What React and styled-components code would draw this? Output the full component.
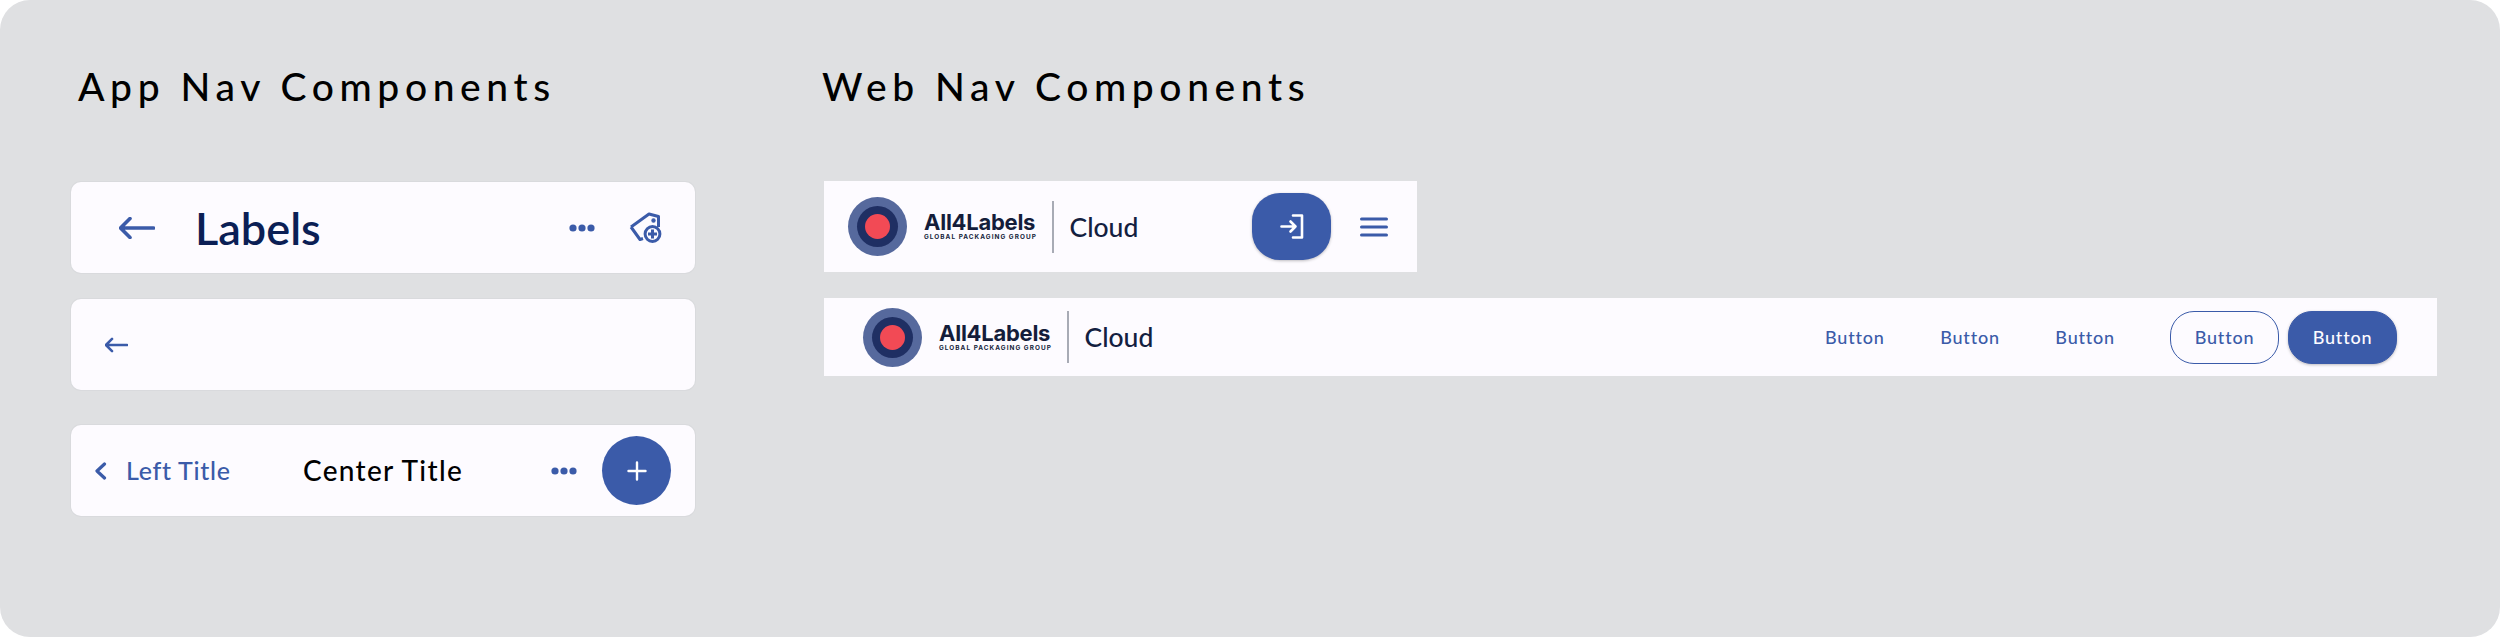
import React from 'react';
import styled, { createGlobalStyle } from 'styled-components';

const BLUE = '#3b5ba9';

const GlobalStyle = createGlobalStyle`
  html, body {
    margin: 0;
    padding: 0;
    background: #ffffff;
  }
  * {
    box-sizing: border-box;
  }
`;

const BackArrow = ({ width, height, strokeWidth }) => (
  <svg width={width} height={height} viewBox="0 0 36 22" fill="none" stroke={BLUE} strokeWidth={strokeWidth} strokeLinecap="round" strokeLinejoin="round">
    <path d="M34.5 11H2M11 1.5L1.5 11l9.5 9.5" />
  </svg>
);

const Dots = () => (
  <svg width="26" height="8" viewBox="0 0 26 8" fill={BLUE}>
    <circle cx="4" cy="4" r="3.6" />
    <circle cx="13" cy="4" r="3.6" />
    <circle cx="22" cy="4" r="3.6" />
  </svg>
);

const TagPlus = () => (
  <svg width="33" height="31" viewBox="0 0 33 31" fill="none" stroke={BLUE} strokeWidth="3" strokeLinejoin="round">
    <path d="M2 15L20 2l9.5 2.5V15M2 15l9 12.5 3-1" />
    <circle cx="24.5" cy="8.5" r="1.6" fill={BLUE} strokeWidth="1.2" />
    <circle cx="23.5" cy="22" r="7.4" />
    <path d="M23.5 17.5v9M19 22h9" strokeLinecap="butt" />
  </svg>
);

const Chevron = () => (
  <svg width="13" height="18" viewBox="0 0 13 18" fill="none" stroke={BLUE} strokeWidth="3.2" strokeLinecap="round" strokeLinejoin="round">
    <path d="M10.5 2L3 9l7.5 7" />
  </svg>
);

const Plus = () => (
  <svg width="20" height="20" viewBox="0 0 20 20" fill="none" stroke="#fff" strokeWidth="2.4" strokeLinecap="round">
    <path d="M10 1.5v17M1.5 10h17" />
  </svg>
);

const LoginIcon = () => (
  <svg width="24" height="25" viewBox="0 0 24 25" fill="none" stroke="#fff" strokeWidth="2.6" strokeLinecap="round" strokeLinejoin="round">
    <path d="M13 1.5h9v22h-9M1.5 12.5h14M10.5 7.5l5 5-5 5" />
  </svg>
);

const Hamburger = () => (
  <svg width="28" height="20" viewBox="0 0 28 20" fill="none" stroke={BLUE} strokeWidth="3" strokeLinecap="round">
    <path d="M1.5 2h25M1.5 10h25M1.5 18h25" />
  </svg>
);

const Logo = () => (
  <LogoWrap>
    <LogoOuter>
      <LogoMiddle>
        <LogoInner />
      </LogoMiddle>
    </LogoOuter>
    <LogoText>
      <LogoName>All4Labels</LogoName>
      <LogoTagline>GLOBAL PACKAGING GROUP</LogoTagline>
    </LogoText>
    <LogoDivider />
    <CloudLabel>Cloud</CloudLabel>
  </LogoWrap>
);

const App = () => (
  <>
    <GlobalStyle />
    <Page>
      <AppColumn>
        <SectionTitle $inset={7} $below={72}>App Nav Components</SectionTitle>
        <AppCard $top={0} $pad="0 33px 0 48px">
          <BackArrow width={36} height={22} strokeWidth={3.6} />
          <LabelsTitle>Labels</LabelsTitle>
          <CardActions $gap={34}>
            <Dots />
            <TagPlus />
          </CardActions>
        </AppCard>
        <AppCard $top={26} $pad="0 0 0 34px">
          <BackArrow width={23} height={16} strokeWidth={4} />
        </AppCard>
        <AppCard $top={35} $pad="0 24px 0 23px">
          <Chevron />
          <LeftTitle>Left Title</LeftTitle>
          <CenterTitle>Center Title</CenterTitle>
          <CardActions $gap={25}>
            <Dots />
            <Fab>
              <Plus />
            </Fab>
          </CardActions>
        </AppCard>
      </AppColumn>
      <WebColumn>
        <SectionTitle $inset={-2} $below={71}>Web Nav Components</SectionTitle>
        <WebBar $width={593} $height={91} $pad="0 29px 0 24px">
          <Logo />
          <BarEnd $gap={29}>
            <LoginButton>
              <LoginIcon />
            </LoginButton>
            <Hamburger />
          </BarEnd>
        </WebBar>
        <WebBar $width={1613} $height={78} $top={26} $pad="0 40px 0 39px">
          <Logo />
          <BarEnd $gap={9}>
            <TextButtons>
              <TextButton>Button</TextButton>
              <TextButton>Button</TextButton>
              <TextButton>Button</TextButton>
            </TextButtons>
            <OutlineButton>Button</OutlineButton>
            <FilledButton>Button</FilledButton>
          </BarEnd>
        </WebBar>
      </WebColumn>
    </Page>
  </>
);

const Page = styled.div`
  width: 2500px;
  height: 637px;
  background: #dfe0e2;
  border-radius: 30px;
  display: flex;
  padding: 62px 0 0 71px;
  overflow: hidden;
`;

const AppColumn = styled.section`
  width: 624px;
  margin-right: 129px;
  display: flex;
  flex-direction: column;
`;

const WebColumn = styled.section`
  width: 1613px;
  display: flex;
  flex-direction: column;
`;

const SectionTitle = styled.h2`
  height: 48px;
  margin: 0 0 ${({ $below }) => $below}px ${({ $inset }) => $inset}px;
  font-family: "Lato", sans-serif;
  font-size: 39px;
  line-height: 48px;
  font-weight: 500;
  letter-spacing: 5.6px;
  color: #000;
  white-space: nowrap;
`;

const AppCard = styled.div`
  height: 91px;
  flex: none;
  margin-top: ${({ $top }) => $top}px;
  padding: ${({ $pad }) => $pad};
  display: flex;
  align-items: center;
  background: #fdfbff;
  border-radius: 10px;
  box-shadow: 0 0 0 1px #d9dadd;
`;

const CardActions = styled.div`
  margin-left: auto;
  display: flex;
  align-items: center;
  gap: ${({ $gap }) => $gap}px;
`;

const LabelsTitle = styled.h1`
  margin: 0 0 0 40px;
  font-family: "Lato", sans-serif;
  font-size: 45px;
  font-weight: 600;
  color: #0b1f55;
`;

const LeftTitle = styled.span`
  margin-left: 19px;
  padding-bottom: 2px;
  width: 177px;
  font-family: "Lato", sans-serif;
  font-size: 25px;
  font-weight: 500;
  letter-spacing: 0.7px;
  color: ${BLUE};
`;

const CenterTitle = styled.span`
  padding-bottom: 2px;
  font-family: "Lato", sans-serif;
  font-size: 28px;
  font-weight: 500;
  letter-spacing: 1.3px;
  color: #000;
`;

const Fab = styled.div`
  width: 69px;
  height: 69px;
  border-radius: 50%;
  background: ${BLUE};
  display: flex;
  align-items: center;
  justify-content: center;
`;

const WebBar = styled.div`
  width: ${({ $width }) => $width}px;
  height: ${({ $height }) => $height}px;
  margin-top: ${({ $top = 0 }) => $top}px;
  padding: ${({ $pad }) => $pad};
  flex: none;
  display: flex;
  align-items: center;
  justify-content: space-between;
  background: #fdfbff;
`;

const LogoWrap = styled.div`
  display: flex;
  align-items: center;
`;

const LogoOuter = styled.div`
  width: 59px;
  height: 59px;
  border-radius: 50%;
  background: #56699d;
  display: flex;
  align-items: center;
  justify-content: center;
`;

const LogoMiddle = styled.div`
  width: 41px;
  height: 41px;
  border-radius: 50%;
  background: #1f2f63;
  display: flex;
  align-items: center;
  justify-content: center;
`;

const LogoInner = styled.div`
  width: 25px;
  height: 25px;
  border-radius: 50%;
  background: #f24a55;
`;

const LogoText = styled.div`
  width: 112px;
  margin-left: 17px;
  display: flex;
  flex-direction: column;
  font-family: "Inter", sans-serif;
  color: #141d3a;
`;

const LogoName = styled.span`
  font-size: 22px;
  line-height: 21px;
  font-weight: 700;
  letter-spacing: -0.25px;
  white-space: nowrap;
`;

const LogoTagline = styled.span`
  font-size: 6.4px;
  line-height: 8px;
  font-weight: 700;
  letter-spacing: 1.05px;
  white-space: nowrap;
`;

const LogoDivider = styled.div`
  width: 1.5px;
  height: 52px;
  margin-left: 16px;
  background: #a8abb5;
`;

const CloudLabel = styled.span`
  margin-left: 16px;
  font-family: "Lato", sans-serif;
  font-size: 26.5px;
  font-weight: 500;
  color: #13203f;
`;

const BarEnd = styled.div`
  display: flex;
  align-items: center;
  gap: ${({ $gap }) => $gap}px;
`;

const LoginButton = styled.button`
  width: 79px;
  height: 67px;
  padding: 0;
  border: 0;
  border-radius: 28px;
  background: ${BLUE};
  box-shadow: 0 1px 3px rgba(0, 0, 0, 0.25);
  display: flex;
  align-items: center;
  justify-content: center;
`;

const TextButtons = styled.div`
  display: flex;
  gap: 55.5px;
  margin-right: 46px;
`;

const TextButton = styled.span`
  font-family: "Lato", sans-serif;
  font-size: 18px;
  font-weight: 500;
  letter-spacing: 0.8px;
  color: ${BLUE};
`;

const OutlineButton = styled.button`
  width: 109px;
  height: 53px;
  padding: 0;
  border: 1.5px solid ${BLUE};
  border-radius: 24px;
  background: transparent;
  font-family: "Lato", sans-serif;
  font-size: 18px;
  font-weight: 500;
  letter-spacing: 0.8px;
  color: ${BLUE};
`;

const FilledButton = styled(OutlineButton)`
  background: ${BLUE};
  color: #fdfbff;
  box-shadow: 0 1px 3px rgba(0, 0, 0, 0.25);
`;

export default App;
